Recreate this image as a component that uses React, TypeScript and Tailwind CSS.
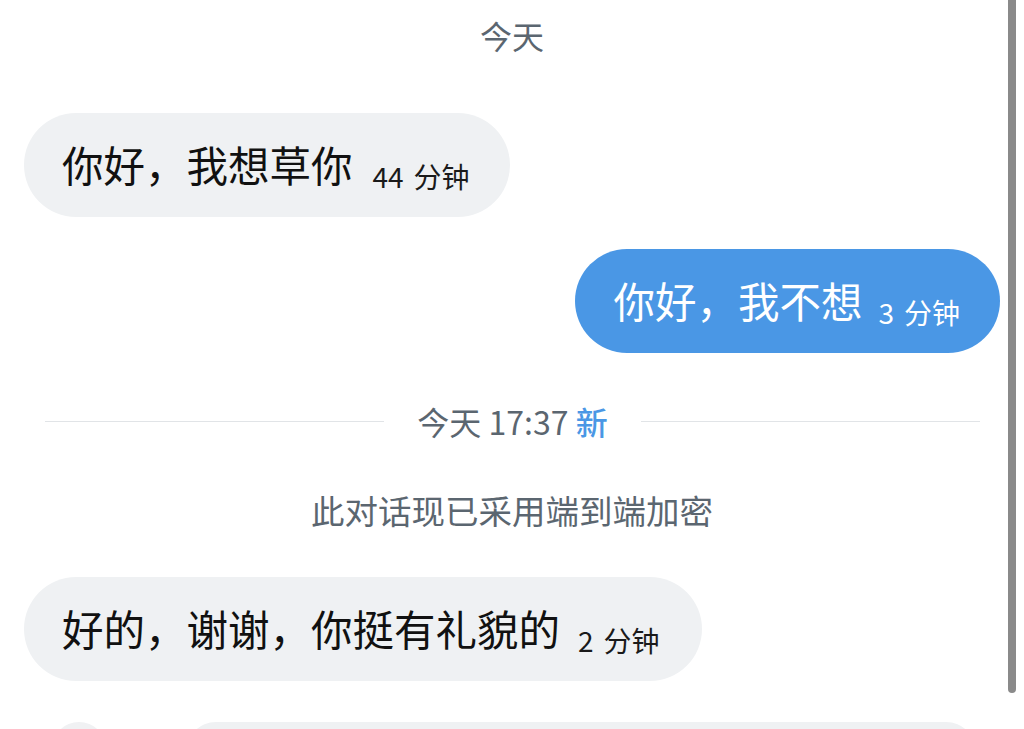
import React from "react";

const font = { fontFamily: '"Noto Sans CJK SC", "Noto Sans", sans-serif' };

function Stamp({ num, light }: { num: string; light?: boolean }) {
  return (
    <span
      className={`inline-flex items-center text-[28px] leading-none mt-[21px] ${
        light ? "text-white" : "text-[#1a1a1a]"
      }`}
    >
      <span>{num}</span>
      <span className="ml-[10px]">分钟</span>
    </span>
  );
}

export default function App() {
  return (
    <div
      className="relative w-[1024px] h-[729px] overflow-hidden bg-white"
      style={font}
    >
      <div className="flex flex-col pt-[19px]">
        <div className="h-[32px] text-[32px] leading-[32px] text-center text-[#5b6670]">
          今天
        </div>

        {/* incoming 1 */}
        <div className="mt-[62px] flex pl-[24px]">
          <div className="h-[104px] rounded-full bg-[#eff1f3] pl-[38px] pr-[40px] flex items-center">
            <span className="text-[41.5px] leading-none text-[#111]">
              你好，我想草你
            </span>
            <span className="ml-[20px] flex">
              <Stamp num="44" />
            </span>
          </div>
        </div>

        {/* outgoing */}
        <div className="mt-[32px] flex justify-end pr-[24px]">
          <div className="h-[104px] rounded-full bg-[#4a97e5] pl-[38px] pr-[40px] flex items-center">
            <span className="text-[41.5px] leading-none text-white">
              你好，我不想
            </span>
            <span className="ml-[16px] flex">
              <Stamp num="3" light />
            </span>
          </div>
        </div>

        {/* divider */}
        <div className="mt-[51px] h-[34px] flex items-center pl-[45px] pr-[44px]">
          <div className="flex-1 h-px bg-[#e1e4e7]" />
          <div className="mx-[33px] text-[32px] leading-[34px] text-[#5b6670] whitespace-nowrap">
            今天 17:37 <span className="text-[#4a97e5] font-medium">新</span>
          </div>
          <div className="flex-1 h-px bg-[#e1e4e7]" />
        </div>

        <div className="mt-[55px] h-[34px] text-[33.5px] leading-[34px] text-center text-[#5b6670]">
          此对话现已采用端到端加密
        </div>

        {/* incoming 2 */}
        <div className="mt-[50px] flex pl-[24px]">
          <div className="h-[104px] rounded-full bg-[#eff1f3] pl-[38px] pr-[42px] flex items-center">
            <span className="text-[41.5px] leading-none text-[#111]">
              好的，谢谢，你挺有礼貌的
            </span>
            <span className="ml-[18px] flex">
              <Stamp num="2" />
            </span>
          </div>
        </div>

        {/* skeleton row */}
        <div className="mt-[41px] flex items-start">
          <div className="ml-[52px] w-[54px] h-[54px] rounded-full bg-[#f0f1f3]" />
          <div className="ml-[80px] w-[790px] h-[60px] rounded-full bg-[#eff1f3]" />
        </div>
      </div>

      {/* scrollbar overlay */}
      <div className="absolute left-[1008px] top-0 w-[8px] h-[693px] bg-[#8a8a8a] rounded-b-full" />
    </div>
  );
}
